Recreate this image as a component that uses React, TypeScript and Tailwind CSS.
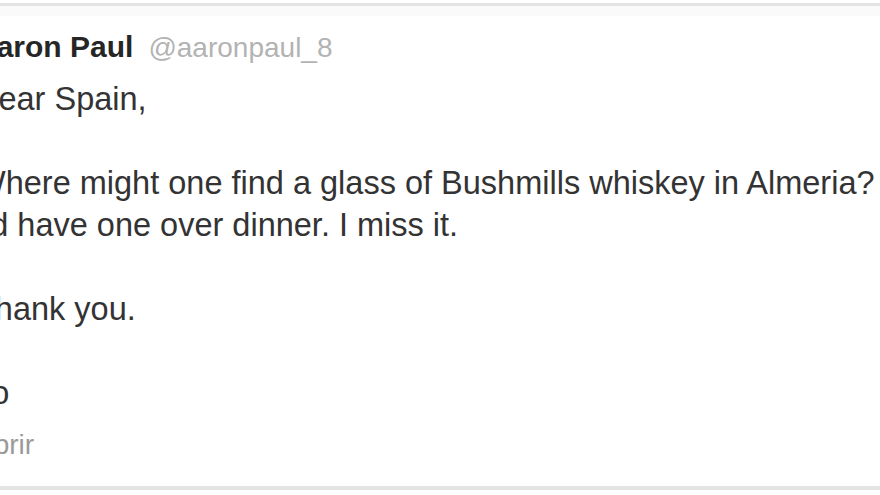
export default function App() {
  const lines = [
    'Dear Spain,',
    '',
    'Where might one find a glass of Bushmills whiskey in Almeria?',
    "I'd have one over dinner. I miss it.",
    '',
    'Thank you.',
    '',
    'xo',
  ];

  return (
    <div className="h-[495px] w-[880px] overflow-hidden bg-white pt-[3px] font-['Liberation_Sans',Arial,sans-serif]">
      <div className="border-t-[3px] border-b-[4px] border-[#e4e4e4]">
        <div className="h-[480px]">
          <div className="h-[10px] bg-[#fafafa]" />
          <div className="ml-[-25px] pt-[13px]">
            {/* header */}
            <div className="flex items-baseline whitespace-nowrap leading-[36px]">
              <span className="text-[30px] font-bold text-[#262626]">Aaron Paul</span>
              <span className="ml-[15px] text-[28px] text-[#b3b3b3]">@aaronpaul_8</span>
            </div>

            {/* tweet body */}
            <div className="mt-[12px] text-[32.5px] leading-[42px] text-[#333]">
              {lines.map((line, i) => (
                <div key={i} className="h-[42px] whitespace-nowrap">
                  {line}
                </div>
              ))}
            </div>

            <div className="mt-[11px] text-[28px] leading-[40px] text-[#9a9a9a]">Abrir</div>
          </div>
        </div>
      </div>
    </div>
  );
}
